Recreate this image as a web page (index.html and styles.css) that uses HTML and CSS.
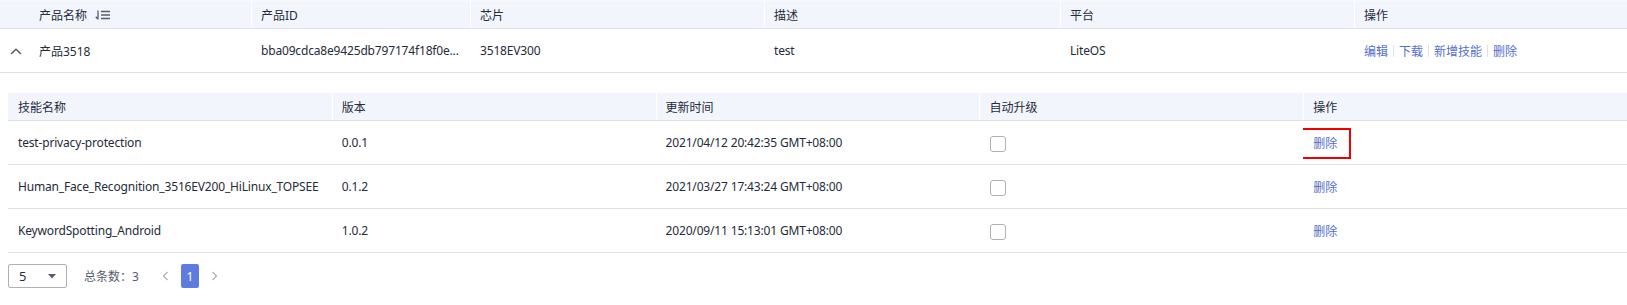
FILE: index.html
```html
<!DOCTYPE html>
<html lang="zh-CN">
<head>
<meta charset="utf-8">
<link rel="stylesheet" href="styles.css">
</head>
<body>
<div class="outer">
  <div class="orow ohead">
    <div class="cell first-h">产品名称
      <svg class="sort" width="16" height="10" viewBox="0 0 16 10"><path d="M3 0.5V9.2M3 9.2L0.8 6.8" fill="none" stroke="#575d6c" stroke-width="1.3"/><path d="M6 1.5H15M6 5H15M6 8.5H15" stroke="#575d6c" stroke-width="1.3"/></svg>
    </div>
    <div class="cell">产品ID</div>
    <div class="cell">芯片</div>
    <div class="cell">描述</div>
    <div class="cell">平台</div>
    <div class="cell">操作</div>
  </div>
  <div class="orow obody">
    <div class="cell first-b">
      <svg class="chev" width="12" height="7" viewBox="0 0 12 7"><path d="M1 6L6 1.2L11 6" fill="none" stroke="#575d6c" stroke-width="1.5"/></svg>
      <span>产品3518</span>
    </div>
    <div class="cell lat">bba09cdca8e9425db797174f18f0e...</div>
    <div class="cell lat">3518EV300</div>
    <div class="cell lat">test</div>
    <div class="cell lat">LiteOS</div>
    <div class="cell links">
      <a class="lnk">编辑</a><span class="sep"></span><a class="lnk">下载</a><span class="sep"></span><a class="lnk">新增技能</a><span class="sep"></span><a class="lnk">删除</a>
    </div>
  </div>
  <div class="expand">
    <div class="inner">
      <div class="irow ihead">
        <div class="cell">技能名称</div>
        <div class="cell">版本</div>
        <div class="cell">更新时间</div>
        <div class="cell">自动升级</div>
        <div class="cell">操作</div>
      </div>
      <div class="irow">
        <div class="cell lat">test-privacy-protection</div>
        <div class="cell lat">0.0.1</div>
        <div class="cell lat">2021/04/12 20:42:35 GMT+08:00</div>
        <div class="cell"><span class="check"></span></div>
        <div class="cell"><a class="lnk marked">删除</a></div>
      </div>
      <div class="irow">
        <div class="cell lat">Human_Face_Recognition_3516EV200_HiLinux_TOPSEE</div>
        <div class="cell lat">0.1.2</div>
        <div class="cell lat">2021/03/27 17:43:24 GMT+08:00</div>
        <div class="cell"><span class="check"></span></div>
        <div class="cell"><a class="lnk">删除</a></div>
      </div>
      <div class="irow">
        <div class="cell lat">KeywordSpotting_Android</div>
        <div class="cell lat">1.0.2</div>
        <div class="cell lat">2020/09/11 15:13:01 GMT+08:00</div>
        <div class="cell"><span class="check"></span></div>
        <div class="cell"><a class="lnk">删除</a></div>
      </div>
    </div>
    <div class="pager">
      <div class="select"><span>5</span>
        <svg width="8" height="5" viewBox="0 0 8 5"><path d="M0 0H8L4 4.5Z" fill="#575d6c"/></svg>
      </div>
      <span class="total">总条数：3</span>
      <svg class="arrow" width="7" height="10" viewBox="0 0 7 10"><path d="M5.5 1L1.5 5L5.5 9" fill="none" stroke="#adb0b8" stroke-width="1.3"/></svg>
      <span class="page">1</span>
      <svg class="arrow" width="7" height="10" viewBox="0 0 7 10"><path d="M1.5 1L5.5 5L1.5 9" fill="none" stroke="#adb0b8" stroke-width="1.3"/></svg>
    </div>
  </div>
</div>
</body>
</html>
```
FILE: styles.css
```css
* { box-sizing: border-box; }
html, body { margin: 0; padding: 0; background: #fff; }
body {
  font-family: "Noto Sans", "Noto Sans CJK SC", sans-serif;
  font-size: 12px;
  color: #252b3a;
  width: 1627px;
  height: 305px;
  overflow: hidden;
}
.orow {
  display: grid;
  grid-template-columns: 251px 219px 294px 296px 294px 1fr;
  border-bottom: 1px solid #dfe1e6;
}
.ohead {
  height: 29px;
  background: #f2f5fc;
  border-top: 1px solid #f8f9fd;
}
.obody { height: 44px; }
.cell {
  display: flex;
  align-items: center;
  padding-left: 10px;
  white-space: nowrap;
  overflow: hidden;
}
.lat { letter-spacing: -0.17px; }
.ohead .cell + .cell, .ihead .cell + .cell { border-left: 1px solid #ffffff; padding-left: 9px; }
.first-h { padding-left: 39px; }
.sort { margin-left: 8px; margin-top: 1px; }
.first-b { padding-left: 10px; }
.chev { margin-right: 17px; margin-top: 1px; }
.lnk { color: #526ecc; text-decoration: none; cursor: pointer; }
.sep {
  display: inline-block;
  width: 1px;
  height: 12px;
  background: #dfe1e6;
  margin: 0 5px;
}
.expand { padding: 20px 0 0 8px; }
.irow {
  display: grid;
  grid-template-columns: repeat(5, 1fr);
  height: 44px;
  border-bottom: 1px solid #dfe1e6;
}
.ihead { height: 28px; background: #f2f5fc; }
.check {
  display: inline-block;
  width: 16px;
  height: 16px;
  border: 1px solid #adb0b8;
  border-radius: 3px;
  margin-left: 1px;
  margin-top: 2px;
}
.marked { position: relative; display: inline-block; line-height: 16px; margin-top: 3px; }
.marked::after {
  content: "";
  position: absolute;
  left: -13px;
  right: -14px;
  top: -8px;
  bottom: -7px;
  border: 2px solid #f00000;
}
.pager {
  display: flex;
  align-items: center;
  margin-top: 11px;
  height: 24px;
}
.select {
  width: 59px;
  height: 24px;
  border: 1px solid #adb0b8;
  border-radius: 2px;
  display: flex;
  align-items: center;
  justify-content: space-between;
  padding: 0 10px 0 10px;
  font-size: 13px;
}
.total { margin-left: 17px; color: #575d6c; }
.arrow { margin-left: 23px; }
.page {
  width: 18px;
  height: 24px;
  background: #5e7ce0;
  color: #fff;
  border-radius: 2px;
  display: flex;
  align-items: center;
  justify-content: center;
  margin-left: 12px;
  margin-right: 12px;
}
.page + .arrow { margin-left: 0; }
```
